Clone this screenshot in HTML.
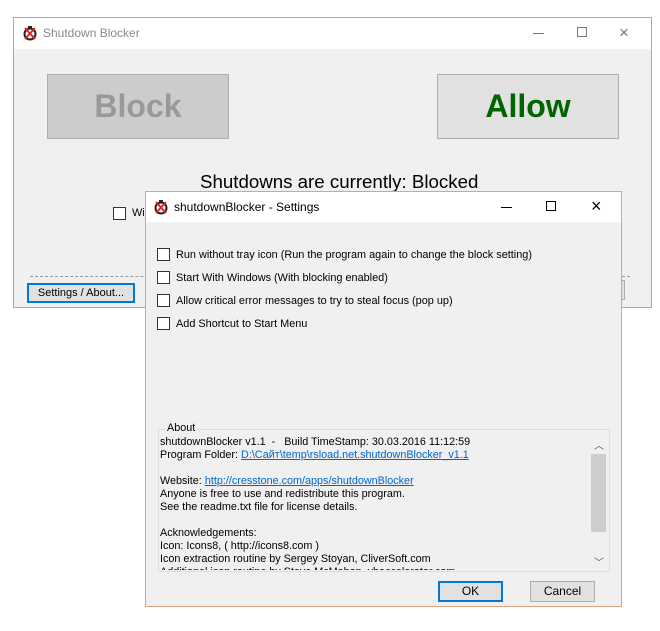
<!DOCTYPE html>
<html><head><meta charset="utf-8"><style>
*{margin:0;padding:0;box-sizing:border-box}
body{width:660px;height:631px;background:#fff;position:relative;overflow:hidden;font-family:"Liberation Sans",sans-serif;font-size:11px;color:#000}
.abs{position:absolute}
.cb{position:absolute;width:13px;height:13px;border:1px solid #333;background:#fff}
.lbl{position:absolute;white-space:nowrap;font-size:10.9px}
.ico{position:absolute;width:16px;height:16px}
a{color:#0066cc;text-decoration:underline}
</style></head><body>
<div class="abs" style="left:13px;top:17px;width:639px;height:291px;border:1px solid #aaa;background:#f0f0f0">
 <div class="abs" style="left:0;top:0;width:637px;height:31px;background:#fff"></div>
 <svg class="ico" style="left:8px;top:7px" viewBox="0 0 16 16"><circle cx="8" cy="9" r="5.5" fill="none" stroke="#222" stroke-width="2"/><rect x="6" y="1" width="4" height="3" fill="#222"/><path d="M3 3 L13 14 M13 3 L3 14" stroke="#d22" stroke-width="2"/></svg>
 <div class="abs" style="left:29px;top:8px;font-size:12px;color:#888">Shutdown Blocker</div>
 <div class="abs" style="left:519px;top:15px;width:11px;height:1px;background:#777"></div>
 <div class="abs" style="left:563px;top:9px;width:10px;height:10px;border:1px solid #777"></div>
 <div class="abs" style="left:605px;top:5px;font-size:17px;color:#777">×</div>
 <div class="abs" style="left:33px;top:56px;width:182px;height:65px;background:#cccccc;border:1px solid #adadad;text-align:center;line-height:63px;font-size:32px;font-weight:bold;color:#999">Block</div>
 <div class="abs" style="left:423px;top:56px;width:182px;height:65px;background:#e1e1e1;border:1px solid #adadad;text-align:center;line-height:63px;font-size:32px;font-weight:bold;color:#006400">Allow</div>
 <div class="abs" style="left:186px;top:153px;font-size:18.7px">Shutdowns are currently: Blocked</div>
 <div class="cb" style="left:99px;top:189px"></div>
 <div class="lbl" style="left:118px;top:189px">Wi</div>
 <div class="abs" style="left:16px;top:258px;width:600px;border-top:1px dashed #999"></div>
 <div class="abs" style="left:13px;top:265px;width:108px;height:20px;border:2px solid #0078d7;background:#e1e1e1;text-align:center;line-height:16px;font-size:11px">Settings / About...</div>
 <div class="abs" style="left:602px;top:262px;width:9px;height:20px;border:1px solid #adadad;border-left:none;background:#e1e1e1"></div>
</div>
<div class="abs" style="left:145px;top:191px;width:477px;height:416px;border:1px solid #d9a47f;background:#f0f0f0">
 <div class="abs" style="left:0;top:0;width:475px;height:30px;background:#fff"></div>
 <svg class="ico" style="left:7px;top:7px" viewBox="0 0 16 16"><circle cx="8" cy="9" r="5.5" fill="none" stroke="#222" stroke-width="2"/><rect x="6" y="1" width="4" height="3" fill="#222"/><path d="M3 3 L13 14 M13 3 L3 14" stroke="#d22" stroke-width="2"/></svg>
 <div class="abs" style="left:28px;top:8px;font-size:12px">shutdownBlocker - Settings</div>
 <div class="abs" style="left:355px;top:15px;width:11px;height:1px;background:#000"></div>
 <div class="abs" style="left:400px;top:9px;width:10px;height:10px;border:1px solid #000"></div>
 <div class="abs" style="left:445px;top:4px;font-size:18px">×</div>
 <div class="cb" style="left:11px;top:56px"></div><div class="lbl" style="left:30px;top:57px">Run without tray icon (Run the program again to change the block setting)</div>
 <div class="cb" style="left:11px;top:79px"></div><div class="lbl" style="left:30px;top:80px">Start With Windows (With blocking enabled)</div>
 <div class="cb" style="left:11px;top:102px"></div><div class="lbl" style="left:30px;top:103px">Allow critical error messages to try to steal focus (pop up)</div>
 <div class="cb" style="left:11px;top:125px"></div><div class="lbl" style="left:30px;top:126px">Add Shortcut to Start Menu</div>
 <div class="abs" style="left:12px;top:237px;width:452px;height:143px;border:1px solid #ddd"></div>
 <div class="abs" style="left:19px;top:230px;background:#f0f0f0;padding:0 2px;font-size:10.8px">About</div>
 <div class="abs" style="left:14px;top:244px;width:432px;height:134px;overflow:hidden;font-size:10.8px;line-height:13px;white-space:nowrap">
  shutdownBlocker v1.1 &nbsp;- &nbsp; Build TimeStamp: 30.03.2016 11:12:59<br>
  Program Folder: <a>D:\Сайт\temp\rsload.net.shutdownBlocker_v1.1</a><br><br>
  Website: <a>http://cresstone.com/apps/shutdownBlocker</a><br>
  Anyone is free to use and redistribute this program.<br>
  See the readme.txt file for license details.<br><br>
  Acknowledgements:<br>
  Icon: Icons8, ( http://icons8.com )<br>
  Icon extraction routine by Sergey Stoyan, CliverSoft.com<br>
  Additional icon routine by Steve McMahon, vbaccelerator.com
 </div>
 <div class="abs" style="left:445px;top:244px;width:16px;height:134px;background:#f0f0f0"></div>
 <div class="abs" style="left:445px;top:262px;width:15px;height:78px;background:#cdcdcd"></div>
 <div class="abs" style="left:448px;top:245px;font-size:10px;color:#555">︿</div>
 <div class="abs" style="left:448px;top:362px;font-size:10px;color:#555">﹀</div>
 <div class="abs" style="left:292px;top:389px;width:65px;height:21px;border:2px solid #0078d7;background:#e1e1e1;text-align:center;line-height:17px;font-size:12px">OK</div>
 <div class="abs" style="left:384px;top:389px;width:65px;height:21px;border:1px solid #adadad;background:#e1e1e1;text-align:center;line-height:19px;font-size:12px">Cancel</div>
</div>
</body></html>
